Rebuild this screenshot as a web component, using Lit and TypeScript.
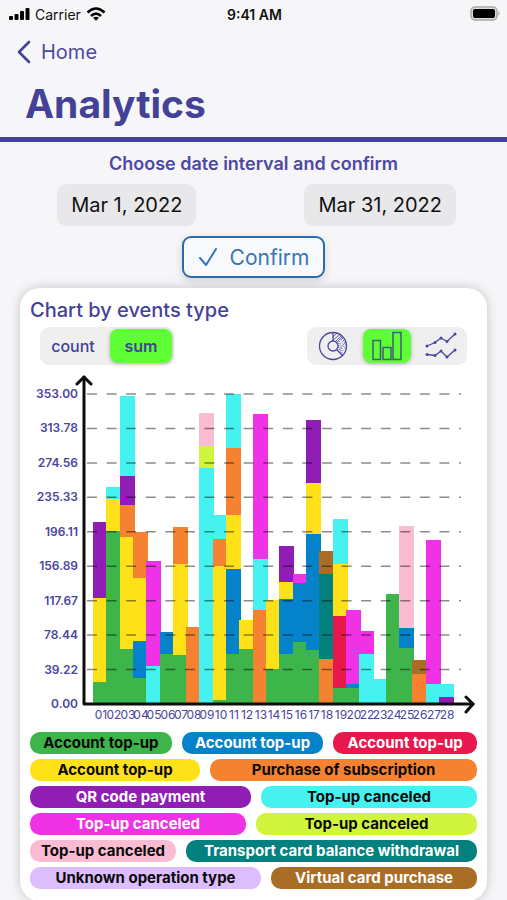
import { LitElement, html, svg, css } from "lit";
import { customElement, state } from "lit/decorators.js";
import { classMap } from "lit/directives/class-map.js";
import { styleMap } from "lit/directives/style-map.js";

const GREEN = "#3db54a";
const BLUE = "#0482ca";
const RED = "#e8174c";
const YELLOW = "#ffe11a";
const ORANGE = "#f58231";
const PURPLE = "#911eb4";
const CYAN = "#46f2ef";
const MAGENTA = "#f032e6";
const LIME = "#d1f53c";
const PINK = "#f9bcd3";
const TEAL = "#04807e";
const LAVENDER = "#dcbeff";
const BROWN = "#a96d26";

type Segment = [color: string, top: number];

/* Stacked segments per day, bottom first; each top is a level on the 0..310 plot scale. */
const DAYS: { day: string; stack: Segment[] }[] = [
  { day: "01", stack: [[GREEN, 22], [YELLOW, 106], [PURPLE, 182]] },
  { day: "02", stack: [[GREEN, 173], [YELLOW, 205], [CYAN, 217]] },
  { day: "03", stack: [[GREEN, 55], [YELLOW, 167], [ORANGE, 199], [PURPLE, 228], [CYAN, 308]] },
  { day: "04", stack: [[GREEN, 26], [BLUE, 63], [YELLOW, 126], [ORANGE, 172]] },
  { day: "05", stack: [[CYAN, 38], [MAGENTA, 143]] },
  { day: "06", stack: [[GREEN, 50], [BLUE, 72]] },
  { day: "07", stack: [[GREEN, 49], [YELLOW, 140], [ORANGE, 177]] },
  { day: "08", stack: [[ORANGE, 77]] },
  { day: "09", stack: [[CYAN, 236], [LIME, 258], [PINK, 291]] },
  { day: "10", stack: [[GREEN, 4], [YELLOW, 138], [ORANGE, 165], [CYAN, 189]] },
  { day: "11", stack: [[GREEN, 50], [BLUE, 135], [YELLOW, 189], [ORANGE, 256], [CYAN, 310]] },
  { day: "12", stack: [[GREEN, 55], [YELLOW, 84]] },
  { day: "13", stack: [[ORANGE, 94], [CYAN, 145], [MAGENTA, 290]] },
  { day: "14", stack: [[GREEN, 35], [YELLOW, 104]] },
  { day: "15", stack: [[GREEN, 50], [BLUE, 105], [YELLOW, 122], [PURPLE, 158]] },
  { day: "16", stack: [[GREEN, 62], [BLUE, 121], [MAGENTA, 130]] },
  { day: "17", stack: [[GREEN, 54], [BLUE, 170], [YELLOW, 221], [PURPLE, 284]] },
  { day: "18", stack: [[ORANGE, 45], [TEAL, 130], [BROWN, 153]] },
  { day: "19", stack: [[GREEN, 16], [RED, 88], [YELLOW, 140], [CYAN, 185]] },
  { day: "20", stack: [[GREEN, 16], [BLUE, 20], [MAGENTA, 94]] },
  { day: "22", stack: [[CYAN, 50], [MAGENTA, 73]] },
  { day: "23", stack: [[CYAN, 25]] },
  { day: "24", stack: [[GREEN, 110]] },
  { day: "25", stack: [[GREEN, 56], [BLUE, 76], [PINK, 178]] },
  { day: "26", stack: [[ORANGE, 30], [BROWN, 44]] },
  { day: "27", stack: [[CYAN, 20], [MAGENTA, 164]] },
  { day: "28", stack: [[PURPLE, 7], [CYAN, 20]] },
];

const TICKS = ["0.00", "39.22", "78.44", "117.67", "156.89", "196.11", "235.33", "274.56", "313.78", "353.00"];

interface Tag {
  label: string;
  color: string;
  grow: number;
  light?: boolean;
}

const LEGEND: Tag[][] = [
  [
    { label: "Account top-up", color: GREEN, grow: 142 },
    { label: "Account top-up", color: BLUE, grow: 142, light: true },
    { label: "Account top-up", color: RED, grow: 144, light: true },
  ],
  [
    { label: "Account top-up", color: YELLOW, grow: 170 },
    { label: "Purchase of subscription", color: ORANGE, grow: 267 },
  ],
  [
    { label: "QR code payment", color: PURPLE, grow: 221, light: true },
    { label: "Top-up canceled", color: CYAN, grow: 216 },
  ],
  [
    { label: "Top-up canceled", color: MAGENTA, grow: 216, light: true },
    { label: "Top-up canceled", color: LIME, grow: 221 },
  ],
  [
    { label: "Top-up canceled", color: PINK, grow: 146 },
    { label: "Transport card balance withdrawal", color: TEAL, grow: 291, light: true },
  ],
  [
    { label: "Unknown operation type", color: LAVENDER, grow: 231 },
    { label: "Virtual card purchase", color: BROWN, grow: 206, light: true },
  ],
];

@customElement("events-chart")
export class EventsChart extends LitElement {
  static styles = css`
    :host {
      display: block;
    }
    .plot {
      display: block;
      width: 100%;
      height: auto;
      font-family: Inter, "Liberation Sans", sans-serif;
      fill: #4a459f;
    }
    .tick {
      font-size: 12px;
      font-weight: 600;
      text-anchor: end;
    }
    .day {
      font-size: 12px;
      font-weight: 400;
      text-anchor: middle;
    }
    .grid {
      stroke: #000;
      stroke-opacity: 0.45;
      stroke-width: 1.5;
    }
    .axis {
      fill: none;
      stroke: #0c0c0c;
      stroke-width: 3;
      stroke-linejoin: round;
      stroke-linecap: round;
    }
  `;

  render() {
    const base = 332;
    const height = 310;
    const first = 63;
    const step = (409 - first) / (DAYS.length - 1);
    const x = (i: number) => Math.round(first + i * step);
    const rise = height / (TICKS.length - 1);
    const left = 57;
    const right = 431;
    const dashes = `10 ${(right - left - 2) / 19 - 10}`;
    return html`
      <svg class="plot" viewBox="0 0 447 350" role="img" aria-label="Sum by event type for each day">
        ${DAYS.map(({ stack }, i) =>
          stack.map(([color, top], k) => {
            const from = k ? stack[k - 1][1] : 0;
            return svg`<rect x=${x(i)} y=${base - top} width="15" height=${top - from} fill=${color}></rect>`;
          })
        )}
        ${TICKS.map((label, i) => {
          const y = base - i * rise;
          return svg`
            ${i ? svg`<line class="grid" x1=${left} x2=${right} y1=${y} y2=${y} stroke-dasharray=${dashes}></line>` : ""}
            <text class="tick" x="48" y=${Math.round(y) + 4}>${label}</text>`;
        })}
        <path class="axis" d="M54 5V332H443"></path>
        <path class="axis" d="M47 12L54 5L61 12M436 325L443 332L436 340"></path>
        ${DAYS.map(({ day }, i) => svg`<text class="day" x=${x(i) + 8} y="347">${day}</text>`)}
      </svg>
    `;
  }
}

@customElement("app-root")
export class AppRoot extends LitElement {
  static styles = css`
    :host {
      display: block;
      min-height: 100vh;
      background: #f6f6f9;
      font-family: Inter, "Liberation Sans", sans-serif;
      color: #444297;
    }
    * {
      box-sizing: border-box;
    }
    button {
      font: inherit;
      color: inherit;
      border: 0;
      margin: 0;
      padding: 0;
      background: none;
      cursor: pointer;
    }
    .status {
      display: grid;
      grid-template-columns: 1fr auto 1fr;
      align-items: center;
      height: 28px;
      padding: 0 6px 0 8px;
      font-size: 14px;
      color: #111;
    }
    .carrier {
      display: flex;
      align-items: center;
      gap: 5px;
    }
    .time {
      font-weight: 600;
    }
    .battery {
      justify-self: end;
    }
    svg {
      display: block;
    }
    .header {
      border-bottom: 5px solid #434199;
    }
    .back {
      display: inline-flex;
      align-items: center;
      gap: 10px;
      height: 48px;
      padding: 0 16px;
      font-size: 20px;
      color: #4c4a9f;
      text-decoration: none;
    }
    .title {
      margin: 0;
      padding: 4px 25px 9px;
      font-size: 39px;
      line-height: 48px;
      font-weight: 700;
    }
    .interval {
      display: flex;
      flex-direction: column;
      align-items: center;
      gap: 10px;
      padding: 10px 0;
    }
    .prompt {
      margin: 0;
      font-size: 18px;
      line-height: 24px;
      font-weight: 600;
      color: #4d48a0;
    }
    .dates {
      display: grid;
      grid-template-columns: 1fr 1fr;
      justify-items: center;
      width: 100%;
      margin-top: -2px;
    }
    .date {
      height: 42px;
      padding: 0 14px;
      border-radius: 9px;
      background: #e8e8ea;
      font-size: 20px;
      color: #111;
    }
    .confirm {
      display: flex;
      align-items: center;
      gap: 12px;
      height: 42px;
      padding: 0 14px;
      border: 2px solid #2b6cab;
      border-radius: 9px;
      background: #f8f9fc;
      box-shadow: 0 3px 8px rgba(0, 0, 0, 0.14);
      font-size: 21px;
      color: #3577b5;
    }
    .card {
      margin: 0 20px;
      padding: 10px 10px 12px;
      border-radius: 20px;
      background: #fff;
      box-shadow: 0 0 12px rgba(0, 0, 0, 0.2);
    }
    .subtitle {
      margin: 0;
      font-size: 20px;
      line-height: 24px;
      font-weight: 500;
    }
    .controls {
      display: flex;
      justify-content: space-between;
      padding: 5px 10px 7px;
    }
    .group {
      display: flex;
      gap: 6px;
      padding: 2px;
      border-radius: 9px;
      background: #efeff0;
    }
    .option {
      display: grid;
      place-items: center;
      height: 34px;
      border-radius: 8px;
      font-size: 16px;
      font-weight: 500;
    }
    .word {
      min-width: 62px;
      padding: 0 9px;
    }
    .glyph {
      width: 48px;
    }
    .chosen {
      background: #5fff35;
      box-shadow: 0 1px 4px rgba(0, 0, 0, 0.25);
    }
    .bold {
      font-weight: 600;
    }
    .legend {
      display: flex;
      flex-direction: column;
      gap: 5px;
      margin: 10px 0 0;
      padding: 0;
      list-style: none;
    }
    .row {
      display: flex;
      gap: 10px;
    }
    .tag {
      flex-basis: 0;
      border-radius: 10px;
      font-size: 15px;
      line-height: 22px;
      font-weight: 700;
      text-align: center;
      white-space: nowrap;
      color: #0a0a0a;
    }
    .light {
      color: #fff;
    }
  `;

  @state() private measure = "sum";
  @state() private chart = "bars";

  private icon(kind: string) {
    if (kind === "pie") {
      return html`<svg width="30" height="30" viewBox="0 0 30 30" fill="none" stroke="#4a459f" stroke-width="1.3">
        <circle cx="15" cy="15" r="13.5"></circle>
        <circle cx="15" cy="15" r="5"></circle>
        <path d="M15 1.500V10M18.500 18.500L24.500 24.500"></path>
        <path stroke-width=".8" d="M15 6L19 2M15 9L22 3.500M18 10L23.500 4.500M18.500 11.500L24.500 5.500"></path>
        <path stroke-width="1" stroke-dasharray="1 1.500" d="M21 10L25 20M23 8L27 18M20 12L24 22M20 16L23 22M24 7L28 14M21 19L27 12"></path>
      </svg>`;
    }
    if (kind === "bars") {
      return html`<svg width="30" height="30" viewBox="0 0 30 30" fill="none" stroke="#3b5f78" stroke-width="1.5">
        <path d="M1 9.500H8.500V28.500H1ZM11 16.500H19V28.500H11ZM21 1.500H29V28.500H21Z"></path>
      </svg>`;
    }
    return html`<svg width="32" height="28" viewBox="0 0 32 28" fill="none" stroke="#4a459f" stroke-width="1.3">
      <path d="M2 14L10 10.500L16 6L22 9.500L30 2M2 22.500L10 23.500L16 19L22 25L30 18"></path>
      <path stroke-width="3" stroke-linecap="round" d="M2 14h0M10 10.500h0M16 6h0M22 9.500h0M30 2h0M2 22.500h0M10 23.500h0M16 19h0M22 25h0M30 18h0"></path>
    </svg>`;
  }

  render() {
    return html`
      <div class="status">
        <div class="carrier">
          <svg width="22" height="14" viewBox="0 0 22 14" fill="#050505">
            <rect x="1" y="9" width="4" height="4" rx="1"></rect>
            <rect x="6.500" y="7" width="4" height="6" rx="1"></rect>
            <rect x="12" y="4" width="4" height="9" rx="1"></rect>
            <rect x="17.500" y="1" width="4" height="12" rx="1"></rect>
          </svg>
          <span>Carrier</span>
          <svg width="20" height="14" viewBox="0 0 20 14" fill="none" stroke="#050505" stroke-width="2.600">
            <path d="M1.500 5.500Q10 -2.500 18.500 5.500M5 9Q10 4.200 15 9"></path>
            <path d="M7 10.800Q10 8.500 13 10.800L10 13.700Z" fill="#050505" stroke="none"></path>
          </svg>
        </div>
        <span class="time">9:41 AM</span>
        <svg class="battery" width="31" height="16" viewBox="0 0 31 16">
          <rect x="1" y="1" width="26" height="13" rx="4" fill="#ddd" stroke="#aaa" stroke-width="1.500"></rect>
          <rect x="3" y="3" width="22" height="9" rx="2" fill="#000"></rect>
          <path d="M28.500 5Q31 7.500 28.500 10Z" fill="#aaa"></path>
        </svg>
      </div>
      <header class="header">
        <a class="back" href="#home">
          <svg width="15" height="24" viewBox="0 0 15 24" fill="none" stroke="#444297" stroke-width="2.600" stroke-linecap="round" stroke-linejoin="round">
            <path d="M13 2L3 12L13 22"></path>
          </svg>
          Home
        </a>
        <h1 class="title">Analytics</h1>
      </header>
      <section class="interval">
        <p class="prompt">Choose date interval and confirm</p>
        <div class="dates">
          <button class="date">Mar 1, 2022</button>
          <button class="date">Mar 31, 2022</button>
        </div>
        <button class="confirm">
          <svg width="20" height="20" viewBox="0 0 20 20" fill="none" stroke="#3577b5" stroke-width="2" stroke-linecap="round" stroke-linejoin="round">
            <path d="M2 11L8 18L18 2"></path>
          </svg>
          Confirm
        </button>
      </section>
      <main class="card">
        <h2 class="subtitle">Chart by events type</h2>
        <div class="controls">
          <div class="group" role="group" aria-label="Measure">
            ${["count", "sum"].map(
              (name) => html`<button
                class=${classMap({ option: true, word: true, chosen: this.measure === name, bold: this.measure === name })}
                aria-pressed=${this.measure === name}
                @click=${() => (this.measure = name)}
              >${name}</button>`
            )}
          </div>
          <div class="group" role="group" aria-label="Chart type">
            ${["pie", "bars", "lines"].map(
              (name) => html`<button
                class=${classMap({ option: true, glyph: true, chosen: this.chart === name })}
                aria-label=${name}
                aria-pressed=${this.chart === name}
                @click=${() => (this.chart = name)}
              >${this.icon(name)}</button>`
            )}
          </div>
        </div>
        <events-chart></events-chart>
        <ul class="legend">
          ${LEGEND.map(
            (row) => html`<li class="row">
              ${row.map(
                (tag) => html`<span
                  class=${classMap({ tag: true, light: !!tag.light })}
                  style=${styleMap({ background: tag.color, flexGrow: String(tag.grow) })}
                >${tag.label}</span>`
              )}
            </li>`
          )}
        </ul>
      </main>
    `;
  }
}
